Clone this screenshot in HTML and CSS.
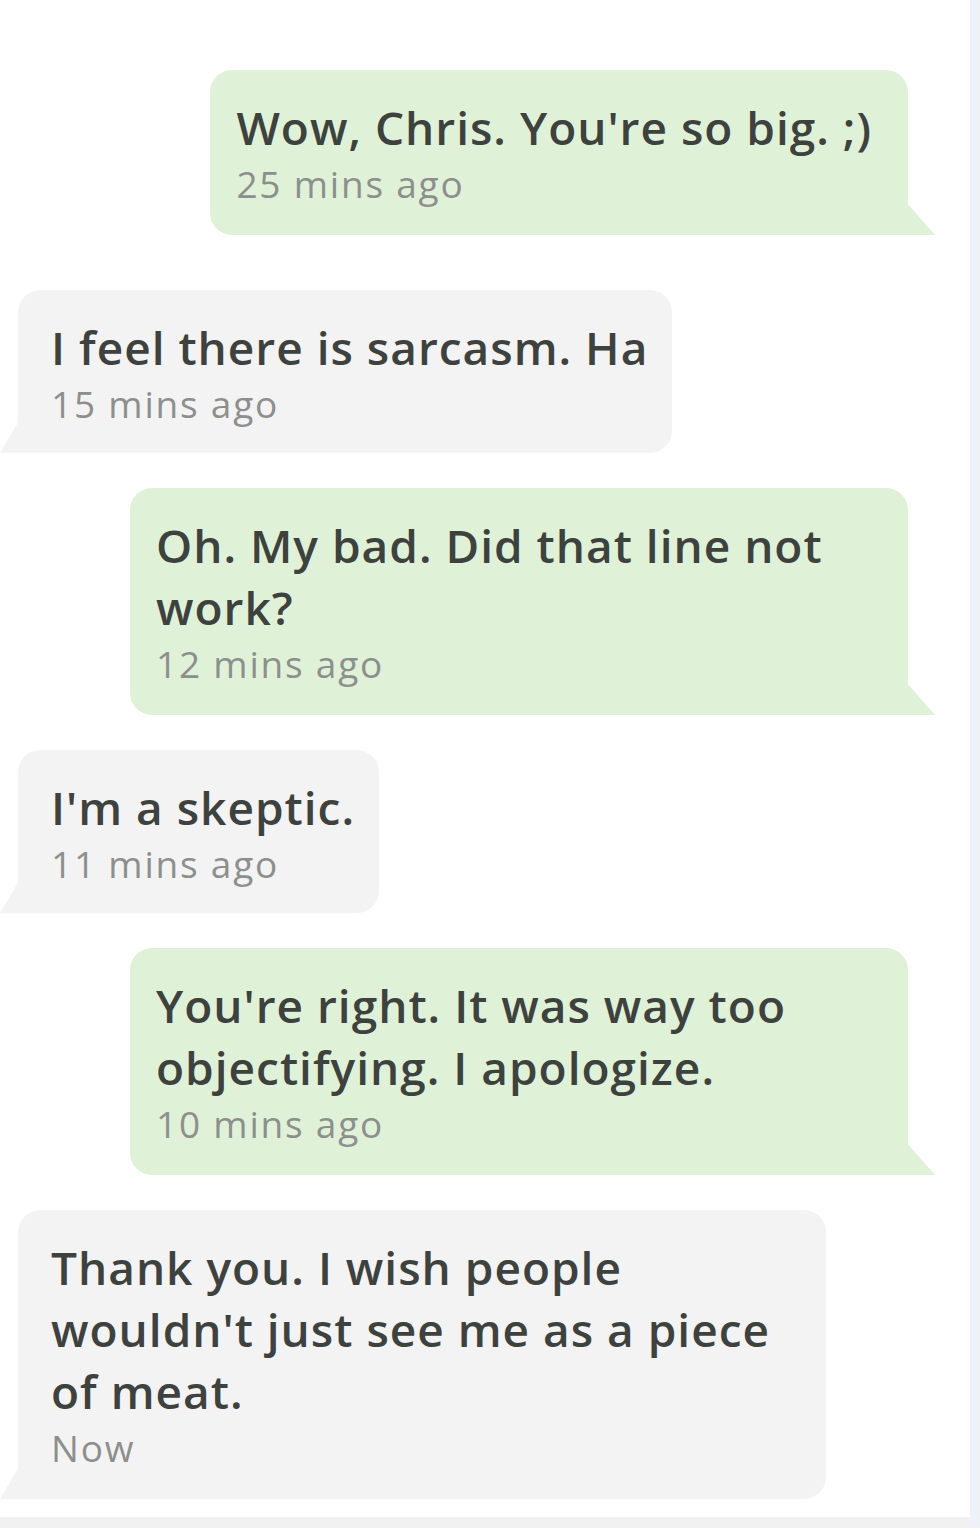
FILE: index.html
```html
<!DOCTYPE html>
<html lang="en">
<head>
<meta charset="utf-8">
<title>Chat</title>
<link rel="stylesheet" href="styles.css">
</head>
<body>
<div class="screen">
  <div class="main">
    <div class="thread">
      <div class="msg out">
        <div class="bubble">
          <p class="text">Wow, Chris. You're so big. ;)</p>
          <p class="time">25 mins ago</p>
        </div>
      </div>
      <div class="msg in gap-a">
        <div class="bubble">
          <p class="text">I feel there is sarcasm. Ha</p>
          <p class="time">15 mins ago</p>
        </div>
      </div>
      <div class="msg out">
        <div class="bubble wide">
          <p class="text">Oh. My bad. Did that line not<br>work?</p>
          <p class="time">12 mins ago</p>
        </div>
      </div>
      <div class="msg in">
        <div class="bubble">
          <p class="text">I'm a skeptic.</p>
          <p class="time">11 mins ago</p>
        </div>
      </div>
      <div class="msg out">
        <div class="bubble wide">
          <p class="text">You're right. It was way too<br>objectifying. I apologize.</p>
          <p class="time">10 mins ago</p>
        </div>
      </div>
      <div class="msg in">
        <div class="bubble wide">
          <p class="text">Thank you. I wish people<br>wouldn't just see me as a piece<br>of meat.</p>
          <p class="time">Now</p>
        </div>
      </div>
    </div>
    <div class="footer-strip"></div>
  </div>
  <div class="side-strip"></div>
</div>
</body>
</html>
```
FILE: styles.css
```css
html, body {
  margin: 0;
  padding: 0;
  background: #ffffff;
}

.screen {
  width: 980px;
  height: 1528px;
  display: flex;
  font-family: "Open Sans", "Liberation Sans", sans-serif;
}

.main {
  flex: 1;
  display: flex;
  flex-direction: column;
}

.thread {
  flex: 1;
  display: flex;
  flex-direction: column;
  gap: 35px;
  padding: 70px 62px 0 18px;
}

.thread .gap-a {
  margin-top: 20px;
}

.footer-strip {
  height: 11px;
  background: #f1f1f1;
}

.side-strip {
  width: 10px;
  background: #eef1f6;
}

.msg {
  display: flex;
}

.msg.out {
  justify-content: flex-end;
}

.msg.in {
  justify-content: flex-start;
}

.bubble {
  position: relative;
  padding: 26px 36px 29px 26px;
}

.out .bubble {
  background: #dff2d8;
  border-radius: 22px 22px 0 22px;
}

.in .bubble {
  background: #f3f3f3;
  border-radius: 22px 22px 22px 0;
  padding-left: 33px;
  padding-right: 24px;
  padding-bottom: 27px;
}

.out .bubble.wide {
  width: 778px;
  box-sizing: border-box;
}

.in .bubble.wide {
  width: 808px;
  box-sizing: border-box;
  padding-bottom: 29px;
}

.out .bubble::after,
.in .bubble::after {
  content: "";
  position: absolute;
  bottom: 0;
  width: 28px;
  height: 32px;
}

.out .bubble::after {
  right: -27px;
  background: #dff2d8;
  clip-path: polygon(0 0, 100% 100%, 0 100%);
}

.in .bubble::after {
  left: -18px;
  width: 19px;
  background: #f3f3f3;
  clip-path: polygon(100% 0, 100% 100%, 0 100%);
}

.text {
  margin: 0;
  font-size: 46px;
  line-height: 62px;
  font-weight: 600;
  color: #3e423e;
  letter-spacing: 1px;
}

.time {
  margin: 4px 0 0;
  font-size: 37px;
  line-height: 44px;
  color: #8d8f8d;
  letter-spacing: 1.8px;
}
```
